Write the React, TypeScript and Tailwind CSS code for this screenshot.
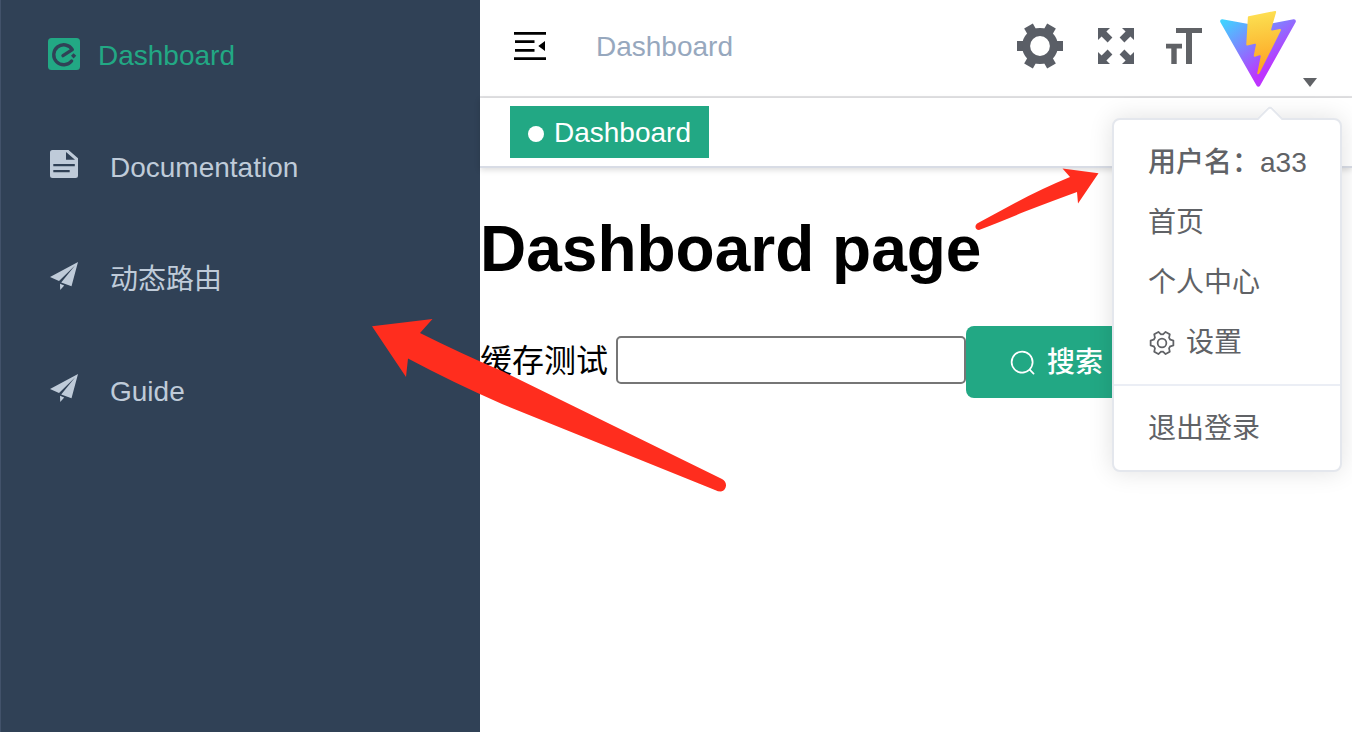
import { useState, type ReactNode } from 'react'

type MenuItem = {
  label: string
  icon: ReactNode
  active?: boolean
}

function DashboardIcon() {
  return (
    <svg viewBox="0 0 32 32" className="mb-1 mr-[18px] size-8 shrink-0" aria-hidden="true">
      <rect width="32" height="32" rx="3.5" fill="#22a884" />
      <path
        d="M15 17.6L24.3 11.6A10 10 0 1 0 23.6 23"
        fill="none"
        stroke="#304156"
        strokeWidth="3.4"
        strokeLinecap="round"
        strokeLinejoin="round"
      />
      <path d="M25.6 15.2L28.2 17.8L25.6 20.4L23 17.8Z" fill="#304156" />
    </svg>
  )
}

function DocumentIcon() {
  return (
    <svg viewBox="0 0 28 28" className="mb-2 mr-8 size-7 shrink-0" fill="currentColor" aria-hidden="true">
      <path
        fillRule="evenodd"
        d="M2.5 0H18.5L28 8.2V25.5A2.5 2.5 0 0 1 25.5 28H2.5A2.5 2.5 0 0 1 0 25.5V2.5A2.5 2.5 0 0 1 2.5 0ZM16 2V9.7H25ZM3.3 14V16.3H24.8V14ZM3.3 20V22.2H19.7V20Z"
      />
    </svg>
  )
}

function PlaneIcon() {
  return (
    <svg viewBox="0 0 28 28" className="mb-2 mr-8 size-7 shrink-0" fill="currentColor" aria-hidden="true">
      <path d="M28 0L0 15L9 19L25 3.6L11.2 20.6L21.5 24.2Z" />
      <path d="M10 21.8L14.2 23.4L10.2 28Z" />
    </svg>
  )
}

function GearIcon() {
  return (
    <svg viewBox="-23 -23 46 46" className="size-[46px]" aria-hidden="true">
      <g fill="#5a5e66">
        <rect x="-23" y="-5" width="8" height="10" />
        <rect x="-23" y="-5" width="8" height="10" transform="rotate(60)" />
        <rect x="-23" y="-5" width="8" height="10" transform="rotate(120)" />
        <rect x="-23" y="-5" width="8" height="10" transform="rotate(180)" />
        <rect x="-23" y="-5" width="8" height="10" transform="rotate(240)" />
        <rect x="-23" y="-5" width="8" height="10" transform="rotate(300)" />
      </g>
      <circle r="13.9" fill="none" stroke="#5a5e66" strokeWidth="8" />
    </svg>
  )
}

const CORNER = 'M-18 -18H-6L-9.6 -14.4L-3.6 -8.4L-8.4 -3.6L-14.4 -9.6L-18 -6Z'

function FullscreenIcon() {
  return (
    <svg viewBox="-18 -18 36 36" className="size-9" fill="#5a5e66" aria-hidden="true">
      <path d={CORNER} />
      <path d={CORNER} transform="rotate(90)" />
      <path d={CORNER} transform="rotate(180)" />
      <path d={CORNER} transform="rotate(270)" />
    </svg>
  )
}

function FontSizeIcon() {
  return (
    <svg viewBox="0 0 36 36" className="size-9" fill="#606266" aria-hidden="true">
      <path d="M10 0H36V5H26V36H20V5H10Z" />
      <path d="M0 15.7H16V20.5H10.7V36H5.3V20.5H0Z" />
    </svg>
  )
}

function FoldIcon() {
  return (
    <svg viewBox="0 0 32 28" className="h-7 w-8" aria-hidden="true">
      <path d="M0 0H32V2.7H0ZM1 8.2H20.5V11H1ZM1 17H20.5V19.8H1ZM0 25.2H32V28H0ZM31 9V19L24.3 14Z" />
    </svg>
  )
}

function Logo() {
  return (
    <svg viewBox="0 0 256 257" className="size-[76px]" aria-hidden="true">
      <defs>
        <linearGradient id="logo-base" x1="-.828%" x2="57.636%" y1="7.652%" y2="78.411%">
          <stop offset="0%" stopColor="#41D1FF" />
          <stop offset="100%" stopColor="#BD34FE" />
        </linearGradient>
        <linearGradient id="logo-bolt" x1="43.376%" x2="50.316%" y1="2.242%" y2="89.03%">
          <stop offset="0%" stopColor="#FFDF52" />
          <stop offset="20%" stopColor="#FBD448" />
          <stop offset="100%" stopColor="#FFA524" />
        </linearGradient>
      </defs>
      <path
        fill="url(#logo-base)"
        d="M255.153 37.938L134.897 252.976c-2.483 4.44-8.862 4.466-11.382.048L.875 37.958c-2.746-4.814 1.371-10.646 6.827-9.67l120.385 21.517a6.537 6.537 0 0 0 2.322-.004l117.867-21.483c5.438-.991 9.574 4.796 6.877 9.62Z"
      />
      <path
        fill="url(#logo-bolt)"
        d="M185.432.063L96.44 17.501a3.268 3.268 0 0 0-2.634 3.014l-5.474 92.456a3.268 3.268 0 0 0 3.997 3.378l24.777-5.718c2.318-.535 4.413 1.507 3.936 3.838l-7.361 36.047c-.495 2.426 1.782 4.5 4.151 3.78l15.304-4.649c2.372-.72 4.652 1.36 4.15 3.788l-11.698 56.621c-.732 3.542 3.979 5.473 5.943 2.437l1.313-2.028l72.516-144.72c1.215-2.423-.88-5.186-3.54-4.672l-25.505 4.922c-2.396.462-4.435-1.77-3.759-4.114l16.646-57.705c.677-2.35-1.37-4.583-3.769-4.113Z"
      />
    </svg>
  )
}

function SearchIcon() {
  return (
    <svg viewBox="0 0 1024 1024" className="size-7" fill="currentColor" aria-hidden="true">
      <path d="m795.904 750.72 124.992 124.928a32 32 0 0 1-45.248 45.248L750.656 795.904a416 416 0 1 1 45.248-45.248zM480 832a352 352 0 1 0 0-704 352 352 0 0 0 0 704z" />
    </svg>
  )
}

function SettingIcon() {
  return (
    <svg viewBox="0 0 1024 1024" className="mr-[10px] size-7" fill="currentColor" aria-hidden="true">
      {/* Teeth sit left and right, so the drawing is turned a quarter */}
      <path
        transform="rotate(90 512 512)"
        d="M600.704 64a32 32 0 0 1 30.464 22.208l35.2 109.376c14.784 7.232 28.928 15.36 42.432 24.512l112.384-24.192a32 32 0 0 1 34.432 15.36L944.32 364.8a32 32 0 0 1-4.032 37.504l-77.12 85.12a357.12 357.12 0 0 1 0 49.024l77.12 85.248a32 32 0 0 1 4.032 37.504l-88.704 153.6a32 32 0 0 1-34.432 15.296L708.8 803.904c-13.44 9.088-27.648 17.28-42.368 24.512l-35.264 109.376A32 32 0 0 1 600.704 960H423.296a32 32 0 0 1-30.464-22.208L357.696 828.48a351.616 351.616 0 0 1-42.56-24.64l-112.32 24.256a32 32 0 0 1-34.432-15.36L79.68 659.2a32 32 0 0 1 4.032-37.504l77.12-85.248a357.12 357.12 0 0 1 0-48.896l-77.12-85.248A32 32 0 0 1 79.68 364.8l88.704-153.6a32 32 0 0 1 34.432-15.296l112.32 24.256c13.568-9.152 27.776-17.408 42.56-24.64l35.2-109.312A32 32 0 0 1 423.232 64H600.64zm-23.424 64H446.72l-36.352 113.088-24.512 11.968a294.113 294.113 0 0 0-34.816 20.096l-22.656 15.36-116.224-25.088-65.28 113.152 79.68 88.192-1.92 27.136a293.12 293.12 0 0 0 0 40.192l1.92 27.136-79.808 88.192 65.344 113.152 116.224-25.024 22.656 15.296a294.113 294.113 0 0 0 34.816 20.096l24.512 11.968L446.72 896h130.688l36.48-113.152 24.448-11.904a288.282 288.282 0 0 0 34.752-20.096l22.592-15.296 116.288 25.024 65.28-113.152-79.744-88.192 1.92-27.136a293.12 293.12 0 0 0 0-40.256l-1.92-27.136 79.808-88.128-65.344-113.152-116.288 24.96-22.592-15.232a287.616 287.616 0 0 0-34.752-20.096l-24.448-11.904L577.344 128zM512 320a192 192 0 1 1 0 384 192 192 0 0 1 0-384zm0 64a128 128 0 1 0 0 256 128 128 0 0 0 0-256z"
      />
    </svg>
  )
}

const MENU: MenuItem[] = [
  { label: 'Dashboard', icon: <DashboardIcon />, active: true },
  { label: 'Documentation', icon: <DocumentIcon /> },
  { label: '动态路由', icon: <PlaneIcon /> },
  { label: 'Guide', icon: <PlaneIcon /> },
]

function Sidebar() {
  return (
    <nav className="w-[480px] shrink-0 border-l border-[#42526a] bg-[#304156]">
      {MENU.map((item) => (
        <a
          key={item.label}
          href="#"
          className={
            item.active
              ? 'flex h-28 items-center pl-[47px] text-[#22a884]'
              : 'flex h-28 items-center pl-[49px] text-[#bfcbd9]'
          }
        >
          {item.icon}
          {item.label}
        </a>
      ))}
    </nav>
  )
}

function UserMenu() {
  const itemClass = 'flex h-[60px] w-full items-center whitespace-nowrap pl-[34px] pr-8 pt-0.5 text-left'

  return (
    <div className="absolute right-[-25px] top-[107px] z-10 w-[230px] rounded-lg border-2 border-[#e4e7ed] bg-white py-3 text-[#606266] shadow-[0_0_24px_rgba(0,0,0,0.12)]">
      {/* Pointer towards the avatar */}
      <span className="absolute right-[61px] top-[-11px] size-[18px] rotate-45 rounded-tl-sm border-l-2 border-t-2 border-[#e4e7ed] bg-white" />
      <div className={`${itemClass} font-medium`}>用户名：a33</div>
      <button className={itemClass}>首页</button>
      <button className={itemClass}>个人中心</button>
      <button className={itemClass}>
        <SettingIcon />
        设置
      </button>
      <hr className="my-3 border-t-2 border-[#ebeef5]" />
      <button className={itemClass}>退出登录</button>
    </div>
  )
}

function Navbar() {
  const [open, setOpen] = useState(true)

  return (
    <header className="flex h-[98px] items-start border-b-2 border-[#e2e2e4] pl-[34px] pr-[35px]">
      <button aria-label="Toggle sidebar" className="mt-8">
        <FoldIcon />
      </button>
      <a href="#" className="ml-[50px] mt-[27px] leading-10 text-[#97a8be]">
        Dashboard
      </a>
      <div className="ml-auto flex items-start">
        <button aria-label="Settings" className="mt-[23px]">
          <GearIcon />
        </button>
        <button aria-label="Full screen" className="ml-[35px] mt-7">
          <FullscreenIcon />
        </button>
        <button aria-label="Font size" className="ml-8 mt-7">
          <FontSizeIcon />
        </button>
        <div className="relative ml-[18px] mt-[11px]">
          <button
            aria-label="User menu"
            aria-expanded={open}
            onClick={() => setOpen(!open)}
            className="flex items-end gap-[7px]"
          >
            <Logo />
            <svg viewBox="0 0 14 9" className="h-[9px] w-[14px]" fill="#606266" aria-hidden="true">
              <path d="M0 0H14L7 9Z" />
            </svg>
          </button>
          {open && <UserMenu />}
        </div>
      </div>
    </header>
  )
}

function TagsView() {
  return (
    <div className="flex h-[70px] items-start border-b-2 border-[#d8dce5] pl-[30px] pt-2 shadow-[0_2px_6px_rgba(0,0,0,0.14)]">
      <a href="#" className="flex h-[52px] items-center gap-2.5 bg-[#22a884] px-[18px] pt-0.5 text-white">
        <span className="mt-0.5 size-4 rounded-full bg-white" />
        Dashboard
      </a>
    </div>
  )
}

function DashboardPage() {
  const [keyword, setKeyword] = useState('')

  return (
    <main className="pt-11 text-black">
      <h1 className="text-[64px] font-bold leading-[74px]">Dashboard page</h1>
      <form className="mt-10 flex items-center" onSubmit={(e) => e.preventDefault()}>
        <label htmlFor="cache-test" className="mb-0.5 shrink-0 text-[32px] leading-10">
          缓存测试
        </label>
        <input
          id="cache-test"
          value={keyword}
          onChange={(e) => setKeyword(e.target.value)}
          className="mb-1 ml-2 h-12 w-[350px] shrink-0 rounded-[5px] border-2 border-[#767676] px-1"
        />
        <button className="flex h-[72px] shrink-0 items-center gap-2.5 rounded-lg bg-[#22a884] px-[43px] pt-0.5 font-medium text-white">
          <SearchIcon />
          搜索
        </button>
      </form>
    </main>
  )
}

// Hand-drawn markers lying over the page
function Annotations() {
  return (
    <div className="pointer-events-none absolute inset-0 z-20 overflow-hidden">
      <svg viewBox="0 0 356 174" className="absolute left-[372px] top-[318px] h-[174px] w-[356px]" fill="#ff2d1e" aria-hidden="true">
        <path d="M0 8.3L60.5 1L48 15Q90 36 130 53L350 161C356 164 355 172 349 173.500Q346 173.500 343 172L130 86Q80 64 36 40.500L34 59Z" />
      </svg>
      <svg viewBox="0 0 124 64" className="absolute left-[975px] top-[168px] h-16 w-[124px]" fill="#ff2d1e" aria-hidden="true">
        <path d="M123.500 5.300L87.500 0.500L95 9Q66 21 40 35L3 55C-1 57 0 62 4 62Q30 52 50 43.500Q80 32 102 24L103 35.500Z" />
      </svg>
    </div>
  )
}

export default function App() {
  return (
    <div className="relative flex min-h-screen overflow-hidden bg-white font-['Liberation_Sans','Noto_Sans_CJK_SC',sans-serif] text-[28px] leading-10">
      <Sidebar />
      <div className="min-w-0 flex-1">
        <Navbar />
        <TagsView />
        <DashboardPage />
      </div>
      <Annotations />
    </div>
  )
}
